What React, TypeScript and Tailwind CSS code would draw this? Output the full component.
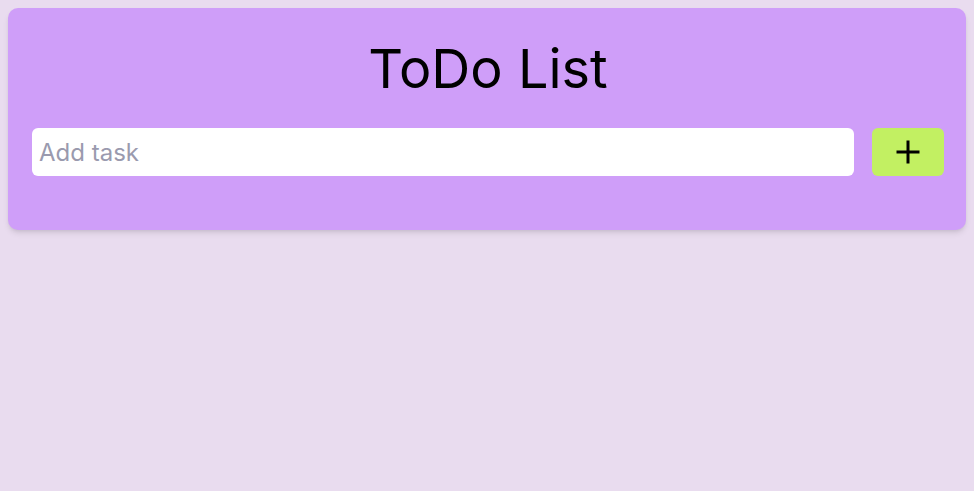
import { useState } from 'react';

export default function App() {
  const [task, setTask] = useState<string>('');

  return (
    <div className="min-h-[491px] bg-[#e9dcef] p-2" style={{ fontFamily: 'Inter, "Noto Sans", sans-serif' }}>
      {/* Card */}
      <div className="rounded-[10px] bg-[#cf9ef9] pl-6 pr-[22px] pt-[26px] pb-[54px] shadow-md">
        <h1 className="text-center text-[54px] leading-[70px] font-normal text-black">ToDo List</h1>
        <div className="mt-6 flex items-center gap-[18px]">
          <input
            value={task}
            onChange={(e) => setTask(e.target.value)}
            placeholder="Add task"
            className="h-12 flex-1 rounded-md bg-white px-[7px] text-[24px] text-black placeholder:text-[#9a9aae] outline-none"
          />
          <button className="flex h-12 w-[72px] items-center justify-center rounded-md bg-[#c2f062]">
            <svg width="24" height="24" viewBox="0 0 24 24" fill="none" stroke="black" strokeWidth={3}>
              <path d="M12 0.5v23M0.5 12h23" />
            </svg>
          </button>
        </div>
      </div>
    </div>
  );
}
